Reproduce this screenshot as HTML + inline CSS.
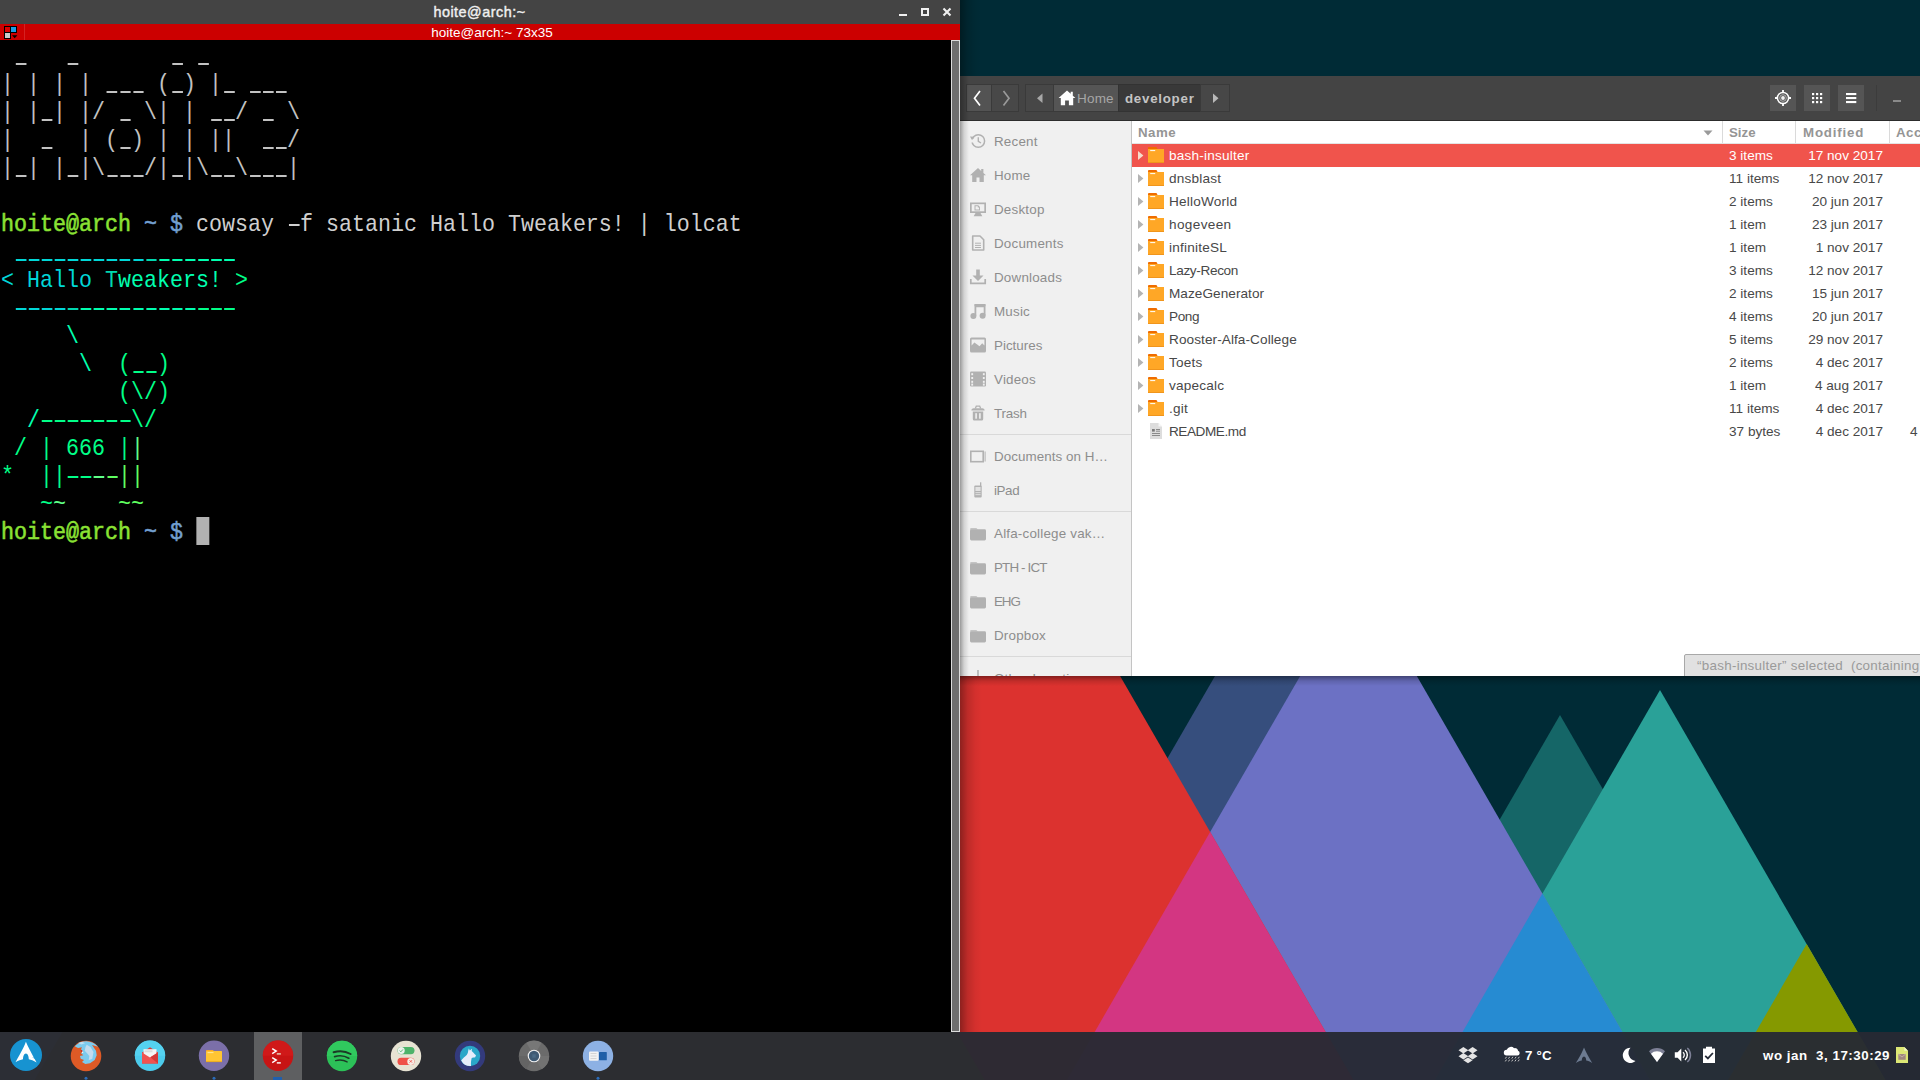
<!DOCTYPE html><html><head><meta charset="utf-8"><title>desktop</title><style>
*{margin:0;padding:0;box-sizing:border-box}
html,body{width:1920px;height:1080px;overflow:hidden;background:#002b36;font-family:"Liberation Sans",sans-serif}
svg{position:absolute;display:block;overflow:visible}
#wall{left:0;top:0;width:1920px;height:1080px}
#term{position:absolute;left:0;top:0;width:960px;height:1032px;background:#000}
#tsh{position:absolute;left:960px;top:0;width:22px;height:1032px;background:linear-gradient(90deg,rgba(0,0,0,.36),rgba(0,0,0,.14) 35%,rgba(0,0,0,.04) 70%,rgba(0,0,0,0))}
#ttitle{position:absolute;left:0;top:0;width:960px;height:24px;background:#444444;color:#f0f0f0;font-size:14.4px;letter-spacing:.5px;-webkit-text-stroke:.4px #f0f0f0;line-height:24px;text-align:center;padding-right:1px}
#tred{position:absolute;left:0;top:24px;width:960px;height:16px;background:#cc0000;color:#fff;font-size:13.5px;line-height:17px;text-align:center;padding-left:24px}
#tscroll{position:absolute;left:951px;top:40px;width:9px;height:992px;background:#6e6e6e;border:1px solid #dcdcdc}
pre.t{position:absolute;left:1px;font-family:"Liberation Mono",monospace;font-size:23.4px;line-height:28px;height:28px;color:#cfcfcf;white-space:pre;transform:scaleX(.9259);transform-origin:0 0}
pre.t b{font-weight:normal;-webkit-text-stroke:.55px currentColor}
.u,.h{display:inline-block;width:.6em;height:28px;vertical-align:top;background:linear-gradient(currentColor,currentColor) no-repeat 2.2px 20px/11.5px 2.3px}
.h{background-position:2.2px 12.9px}
.g{color:#8ae234}.bl{color:#729fcf}
#fm{position:absolute;left:960px;top:76px;width:960px;height:600px;background:#fff;overflow:hidden}
#fmhead{position:absolute;left:0;top:0;width:960px;height:45px;background:#444444;border-bottom:1px solid #2c2c2c}
.hb{position:absolute;top:8px;height:28px;border:1px solid #3a3a3a}
.ht{position:absolute;top:10px;height:27px;line-height:26px;font-size:13.5px;white-space:nowrap}
#side{position:absolute;left:0;top:45px;width:172px;height:555px;background:#f0f0f0;border-right:1px solid #c4c4c4}
#fsh{position:absolute;left:0;top:45px;width:9px;height:555px;background:linear-gradient(90deg,rgba(0,0,0,.36),rgba(0,0,0,.12) 45%,rgba(0,0,0,0))}
#fsh2{position:absolute;left:0;top:0;width:9px;height:45px;background:linear-gradient(90deg,rgba(0,0,0,.30),rgba(0,0,0,0))}
.si{position:absolute;left:34px;font-size:13.4px;color:#8d8d8d;height:34px;line-height:36px;white-space:nowrap;letter-spacing:0.2px}
.sep{position:absolute;left:0;width:171px;height:1px;background:#d9d9d9}
.sic{left:10px;width:16px;height:16px}
#colh{position:absolute;left:172px;top:45px;width:788px;height:23px;background:#fff;border-bottom:1px solid #e4e4e4}
.ch{position:absolute;top:0;height:22px;line-height:24px;font-size:13.3px;font-weight:bold;color:#959595;letter-spacing:0.45px}
.chs{position:absolute;top:0;width:1px;height:22px;background:#dadada}
.row{position:absolute;left:172px;width:788px;height:23px;font-size:13.6px;line-height:23px;color:#484848;white-space:nowrap}
.row.sel{background:#f0544c;color:#fff}
.row span{position:absolute;top:0}
.nm{left:37px;letter-spacing:.2px}.sz{left:597px}.dt{right:37px;text-align:right}
#stat{position:absolute;left:724px;top:578px;width:240px;height:24px;background:#e1e1e1;border:1px solid #a8a8a8;border-radius:2px 0 0 0;font-size:13.4px;line-height:21px;color:#9a9a9a;padding-left:12px;white-space:pre;overflow:hidden;letter-spacing:.28px}
#bar{position:absolute;left:0;top:1032px;width:1920px;height:48px;background:rgba(38,42,51,0.962)}
#hl{position:absolute;left:254px;top:1032px;width:48px;height:48px;background:#5e5f61}
.tt{position:absolute;top:1046px;height:20px;line-height:20px;font-size:13.3px;font-weight:bold;color:#fff;white-space:pre}
</style></head><body>
<svg id="wall" viewBox="0 0 1920 1080">
<rect width="1920" height="1080" fill="#002b36"/>
<polygon points="1215,676 1400,676 1400,1100 970,1100" fill="#364e7d"/>
<polygon points="1560,715 1782.3,1100 1337.7,1100" fill="#156667"/>
<polygon points="1660,690 1896.7,1100 1423.3,1100" fill="#2aa198"/>
<polygon points="1358.5,575 1661.6,1100 1055.4,1100" fill="#6c71c4"/>
<polygon points="1542.4,893.6 1661.6,1100 1423.3,1100" fill="#268bd2"/>
<polygon points="694,-62 1364.9,1100 23.1,1100" fill="#dc322f"/>
<polygon points="509.5,257 996.2,1100 22.8,1100" fill="#b58900"/>
<polygon points="0,1000 81,1000 23,1100 0,1100" fill="#b09a70"/>
<polygon points="1210.1,832.0 1364.8,1100 1055.4,1100" fill="#d33682"/>
<polygon points="1806.65,944 1897.11,1100 1716.58,1100" fill="#859900"/>
</svg>
<div id="term">
<div id="ttitle">hoite@arch:~</div>
<div id="tred">hoite@arch:~ 73x35</div>
<svg style="left:895px;top:4px;width:60px;height:16px" viewBox="895 4 60 16"><rect x="899" y="14" width="8" height="2" fill="#f0f0f0"/><rect x="922" y="9" width="6" height="6" fill="none" stroke="#f0f0f0" stroke-width="2"/><path d="M943.5 8.5L950.5 15.5M950.5 8.5L943.5 15.5" stroke="#f0f0f0" stroke-width="2.1"/></svg>
<svg style="left:0;top:24px;width:26px;height:16px" viewBox="0 24 26 16"><path d="M4 26h13v7h-6v6H4z" fill="#000"/><rect x="5" y="27" width="5" height="5" fill="#dd0000"/><rect x="11" y="27" width="5" height="5" fill="#1c9be4"/><rect x="5" y="33" width="5" height="5" fill="#c9c9c9"/><path d="M12 35.3h5.4l-2.7 3z" fill="#000"/><rect x="24" y="24" width="1" height="16" fill="#d42222"/></svg>
<div id="tscroll"></div>
<pre class="t" style="top:43px"><span style="color:#c2c2c2"> <span class="u"></span>   <span class="u"></span>       <span class="u"></span> <span class="u"></span></span></pre>
<pre class="t" style="top:71px"><span style="color:#c2c2c2">| | | | <span class="u"></span><span class="u"></span><span class="u"></span> (<span class="u"></span>) |<span class="u"></span> <span class="u"></span><span class="u"></span><span class="u"></span></span></pre>
<pre class="t" style="top:99px"><span style="color:#c2c2c2">| |<span class="u"></span>| |/ <span class="u"></span> \| | <span class="u"></span><span class="u"></span>/ <span class="u"></span> \</span></pre>
<pre class="t" style="top:127px"><span style="color:#c2c2c2">|  <span class="u"></span>  | (<span class="u"></span>) | | ||  <span class="u"></span><span class="u"></span>/</span></pre>
<pre class="t" style="top:155px"><span style="color:#c2c2c2">|<span class="u"></span>| |<span class="u"></span>|\<span class="u"></span><span class="u"></span><span class="u"></span>/|<span class="u"></span>|\<span class="u"></span><span class="u"></span>\<span class="u"></span><span class="u"></span><span class="u"></span>|</span></pre>
<pre class="t" style="top:211px"><b><span class="g">hoite@arch</span> <span class="bl">~ $</span></b> cowsay <span class="h"></span>f satanic Hallo Tweakers! | lolcat</pre>
<pre class="t" style="top:239px"> <span class="u" style="color:#00d7d7"></span><span class="u" style="color:#00d7d7"></span><span class="u" style="color:#00d7d7"></span><span class="u" style="color:#00d7d7"></span><span class="u" style="color:#00d7d7"></span><span class="u" style="color:#00d7d7"></span><span class="u" style="color:#00d7d7"></span><span class="u" style="color:#00d7d7"></span><span class="u" style="color:#00d7d7"></span><span class="u" style="color:#00d7d7"></span><span class="u" style="color:#00d7af"></span><span class="u" style="color:#00ffaf"></span><span class="u" style="color:#00ffaf"></span><span class="u" style="color:#00ffaf"></span><span class="u" style="color:#00ffaf"></span><span class="u" style="color:#00ffaf"></span><span class="u" style="color:#00ffaf"></span></pre>
<pre class="t" style="top:267px"><span style="color:#00d7d7">&lt;</span> <span style="color:#00d7d7">H</span><span style="color:#00d7d7">a</span><span style="color:#00d7d7">l</span><span style="color:#00d7d7">l</span><span style="color:#00d7d7">o</span> <span style="color:#00d7af">T</span><span style="color:#00ffaf">w</span><span style="color:#00ffaf">e</span><span style="color:#00ffaf">a</span><span style="color:#00ffaf">k</span><span style="color:#00ffaf">e</span><span style="color:#00ffaf">r</span><span style="color:#00ffaf">s</span><span style="color:#00ffaf">!</span> <span style="color:#00ff87">&gt;</span></pre>
<pre class="t" style="top:295px"> <span class="h" style="color:#00d7d7"></span><span class="h" style="color:#00d7d7"></span><span class="h" style="color:#00d7d7"></span><span class="h" style="color:#00d7d7"></span><span class="h" style="color:#00d7af"></span><span class="h" style="color:#00ffaf"></span><span class="h" style="color:#00ffaf"></span><span class="h" style="color:#00ffaf"></span><span class="h" style="color:#00ffaf"></span><span class="h" style="color:#00ffaf"></span><span class="h" style="color:#00ffaf"></span><span class="h" style="color:#00ffaf"></span><span class="h" style="color:#00ffaf"></span><span class="h" style="color:#00ffaf"></span><span class="h" style="color:#00ff87"></span><span class="h" style="color:#00ff87"></span><span class="h" style="color:#00ff87"></span></pre>
<pre class="t" style="top:323px">     <span style="color:#00ffaf">\</span></pre>
<pre class="t" style="top:351px">      <span style="color:#00ffaf">\</span>  <span style="color:#00ff87">(</span><span class="u" style="color:#00ff87"></span><span class="u" style="color:#00ff87"></span><span style="color:#00ff87">)</span></pre>
<pre class="t" style="top:379px">         <span style="color:#00ff87">(</span><span style="color:#00ff87">\</span><span style="color:#00ff87">/</span><span style="color:#00ff87">)</span></pre>
<pre class="t" style="top:407px">  <span style="color:#00ffaf">/</span><span class="h" style="color:#00ff87"></span><span class="h" style="color:#00ff87"></span><span class="h" style="color:#00ff87"></span><span class="h" style="color:#00ff87"></span><span class="h" style="color:#00ff87"></span><span class="h" style="color:#00ff87"></span><span class="h" style="color:#00ff87"></span><span style="color:#00ff87">\</span><span style="color:#00ff87">/</span></pre>
<pre class="t" style="top:435px"> <span style="color:#00ff87">/</span> <span style="color:#00ff87">|</span> <span style="color:#00ff87">6</span><span style="color:#00ff87">6</span><span style="color:#00ff87">6</span> <span style="color:#00ff87">|</span><span style="color:#5fff87">|</span></pre>
<pre class="t" style="top:463px"><span style="color:#00ff87">*</span>  <span style="color:#00ff87">|</span><span style="color:#00ff87">|</span><span class="h" style="color:#00ff87"></span><span class="h" style="color:#00ff87"></span><span class="h" style="color:#5fff87"></span><span class="h" style="color:#5fff5f"></span><span style="color:#5fff5f">|</span><span style="color:#5fff5f">|</span></pre>
<pre class="t" style="top:491px">   <span style="color:#00ff87">~</span><span style="color:#5fff87">~</span>    <span style="color:#5fff5f">~</span><span style="color:#5fff5f">~</span></pre>
<pre class="t" style="top:519px"><b><span class="g">hoite@arch</span> <span class="bl">~ $</span></b> <span style="background:#b2b2b2;display:inline-block;width:.6em;height:28px;vertical-align:top;margin-top:-2px"></span></pre>
</div>
<div id="tsh"></div>
<div id="fm">
<div id="fmhead">
<div class="hb" style="left:6px;width:26px;background:#535353"></div>
<div class="hb" style="left:31px;width:28px;background:#484848"></div>
<div class="hb" style="left:65px;width:29px;background:#474747"></div>
<div class="hb" style="left:93px;width:66px;background:#555555"></div>
<div class="hb" style="left:158px;width:83px;background:#393939;border-color:#333"></div>
<div class="hb" style="left:240px;width:30px;background:#474747"></div>
<svg style="left:0;top:0;width:280px;height:45px" viewBox="960 76 280 45"><path d="M980 91l-5.5 7.2 5.5 7.2" fill="none" stroke="#fff" stroke-width="1.7"/><path d="M1003.5 91l5.5 7.2-5.5 7.2" fill="none" stroke="#9a9a9a" stroke-width="1.7"/><path d="M1042.5 93.5v9.5l-5.5-4.75z" fill="#a8a8a8"/><path d="M1213 93.5v9.5l5.500-4.75z" fill="#b8b8b8"/><path d="M1067 90.5l-8.400 7.600h2.200v7.200h4.300v-4.800h3.800v4.800h4.300v-7.200h2.200l-2.600-2.350v-3.900h-2.100v2z" fill="#fff"/></svg>
<div class="ht" style="left:117px;color:#a6a6a6;letter-spacing:0.2px">Home</div>
<div class="ht" style="left:165px;color:#c4c4c4;font-weight:bold;letter-spacing:0.75px;font-size:13.3px">developer</div>
<div class="hb" style="left:810px;top:9px;width:26px;height:26px;background:#555;border:none"></div>
<div class="hb" style="left:844px;top:9px;width:26px;height:26px;background:#555;border:none"></div>
<div class="hb" style="left:878px;top:9px;width:26px;height:26px;background:#555;border:none"></div>
<svg style="left:800px;top:0;width:160px;height:45px" viewBox="1760 76 160 45"><circle cx="1783" cy="98" r="5.6" fill="none" stroke="#fff" stroke-width="1.5"/><circle cx="1783" cy="98" r="3.3" fill="none" stroke="#d0d0d0" stroke-width=".7"/><circle cx="1783" cy="98" r="1.9" fill="#f2f2f2"/><path d="M1783 90v3M1783 103v3M1775 98h3M1788 98h3" stroke="#fff" stroke-width="1.8"/><rect x="1812" y="93" width="2.2" height="2.2" fill="#fff"/><rect x="1812" y="97" width="2.2" height="2.2" fill="#fff"/><rect x="1812" y="101" width="2.2" height="2.2" fill="#fff"/><rect x="1816" y="93" width="2.2" height="2.2" fill="#fff"/><rect x="1816" y="97" width="2.2" height="2.2" fill="#fff"/><rect x="1816" y="101" width="2.2" height="2.2" fill="#fff"/><rect x="1820" y="93" width="2.2" height="2.2" fill="#fff"/><rect x="1820" y="97" width="2.2" height="2.2" fill="#fff"/><rect x="1820" y="101" width="2.2" height="2.2" fill="#fff"/><rect x="1846" y="93" width="10.3" height="2.1" fill="#fff"/><rect x="1846" y="97" width="10.3" height="2.1" fill="#fff"/><rect x="1846" y="101" width="10.3" height="2.1" fill="#fff"/><rect x="1876" y="85" width="1" height="26" fill="#3c3c3c"/><rect x="1893" y="100" width="8" height="2" fill="#8a8a8a"/></svg>
</div>
<div id="side">
<svg class="sic" style="top:12px" viewBox="0 0 16 16"><circle cx="8.300" cy="8" r="6.300" fill="none" stroke="#b1b1b1" stroke-width="1.5"/><path d="M8.300 4.300v4l2.700 1.700" fill="none" stroke="#b1b1b1" stroke-width="1.400"/><path d="M0 3.500l4.600.3-2.500 3.700z" fill="#b1b1b1"/><rect x="0" y="6.500" width="3.200" height="3" fill="#f0f0f0"/></svg>
<div class="si" style="top:3px">Recent</div>
<svg class="sic" style="top:46px" viewBox="0 0 16 16"><path d="M8 1L0 8.300h2.200V15h4.300v-4.600h3V15h4.300V8.300H16l-2.600-2.400V2h-2.200v1.900z" fill="#b1b1b1"/></svg>
<div class="si" style="top:37px">Home</div>
<svg class="sic" style="top:80px" viewBox="0 0 16 16"><path d="M0 1.500h16v10.500H0z" fill="#b1b1b1"/><rect x="1.700" y="3.200" width="12.600" height="7.100" fill="#f0f0f0"/><path d="M4.500 4.200h3.800l1.700 1.700v3.600H4.500z" fill="#b1b1b1"/><path d="M5.500 5.200h2.300v1.400h1.300v2H5.500z" fill="#f0f0f0"/><path d="M5.500 12h5l1.800 3.200H3.700z" fill="#b1b1b1"/></svg>
<div class="si" style="top:71px">Desktop</div>
<svg class="sic" style="top:114px" viewBox="0 0 16 16"><path d="M2.700 1h7.300l3.700 3.700v10.300H2.700z" fill="none" stroke="#b1b1b1" stroke-width="1.600" stroke-linejoin="round"/><path d="M5 8.200h6M5 10.400h6M5 12.500h6" stroke="#b1b1b1" stroke-width="1"/></svg>
<div class="si" style="top:105px">Documents</div>
<svg class="sic" style="top:148px" viewBox="0 0 16 16"><path d="M6.200 .5h3.600v6h3.700L8 12 2.500 6.500h3.700z" fill="#b1b1b1"/><path d="M.8 10v4.300h14.400V10" fill="none" stroke="#b1b1b1" stroke-width="1.700"/></svg>
<div class="si" style="top:139px">Downloads</div>
<svg class="sic" style="top:182px" viewBox="0 0 16 16"><path d="M4.500 1h11v11.500h-1.800V4.300H6.300v8.500H4.500z" fill="#b1b1b1"/><rect x="4.500" y="1" width="11" height="2.600" rx="1" fill="#b1b1b1"/><circle cx="3.400" cy="13" r="3" fill="#b1b1b1"/><circle cx="12.600" cy="12.800" r="3" fill="#b1b1b1"/></svg>
<div class="si" style="top:173px">Music</div>
<svg class="sic" style="top:216px" viewBox="0 0 16 16"><rect x="0" y=".5" width="16" height="15" rx="1.500" fill="#b1b1b1"/><path d="M1.600 8.500V2.500h12.800v6l-2.200-2.300-2.700 3-2.300-1.800-2.800-2z" fill="#f0f0f0"/></svg>
<div class="si" style="top:207px;letter-spacing:-0.0px">Pictures</div>
<svg class="sic" style="top:250px" viewBox="0 0 16 16"><rect x="0" y=".5" width="16" height="15" rx="1.300" fill="#b1b1b1"/><rect x="1.3" y="2.2" width="1.800" height="2" fill="#f0f0f0"/><rect x="1.3" y="6" width="1.800" height="2" fill="#f0f0f0"/><rect x="1.3" y="9.8" width="1.800" height="2" fill="#f0f0f0"/><rect x="1.3" y="12.6" width="1.800" height="2" fill="#f0f0f0"/><rect x="12.9" y="2.2" width="1.800" height="2" fill="#f0f0f0"/><rect x="12.9" y="6" width="1.800" height="2" fill="#f0f0f0"/><rect x="12.9" y="9.8" width="1.800" height="2" fill="#f0f0f0"/><rect x="12.9" y="12.6" width="1.800" height="2" fill="#f0f0f0"/><rect x="4.300" y="1.800" width="7.400" height="12.400" fill="#f0f0f0" opacity=".0"/></svg>
<div class="si" style="top:241px">Videos</div>
<svg class="sic" style="top:284px" viewBox="0 0 16 16"><path d="M2.800 6.500h10.400v7.500a1.500 1.500 0 0 1-1.500 1.500H4.300a1.500 1.500 0 0 1-1.500-1.500z" fill="#b1b1b1"/><rect x="5.300" y="8.200" width="1.600" height="5.500" fill="#f0f0f0"/><rect x="9.100" y="8.200" width="1.600" height="5.500" fill="#f0f0f0"/><path d="M1.300 5.500c0-1.300 1-2.300 2.300-2.300h8.800c1.300 0 2.300 1 2.300 2.300z" fill="#b1b1b1"/><path d="M5.300 3.500l1-2.300h3.400l1 2.300" fill="none" stroke="#b1b1b1" stroke-width="1.300"/></svg>
<div class="si" style="top:275px;letter-spacing:-0.2px">Trash</div>
<div class="sep" style="top:313px"></div>
<svg class="sic" style="top:327px" viewBox="0 0 16 16"><rect x=".8" y="3.300" width="12.400" height="10.400" fill="none" stroke="#b1b1b1" stroke-width="1.600"/><rect x="14.600" y="3.500" width="1" height="10" fill="#b1b1b1"/></svg>
<div class="si" style="top:318px;letter-spacing:0.05px">Documents on H…</div>
<svg class="sic" style="top:361px" viewBox="0 0 16 16"><rect x="4.300" y="3.500" width="7.400" height="12" rx="1" fill="#b1b1b1"/><rect x="10" y="0.300" width="1.300" height="4" fill="#b1b1b1"/><rect x="5.400" y="5" width="5.200" height="4" fill="#e2e2e2"/><rect x="5.400" y="10" width="5.200" height="1.200" fill="#d8d8d8"/><rect x="5.400" y="12" width="5.200" height="1.200" fill="#d8d8d8"/></svg>
<div class="si" style="top:352px;letter-spacing:-0.4px">iPad</div>
<div class="sep" style="top:390px"></div>
<svg class="sic" style="top:404px" viewBox="0 0 16 16"><path d="M0 4.300c0-.8.600-1.400 1.400-1.400h5l1.500 1.700H0z" fill="#c4c4c4"/><rect x="0" y="4.300" width="16" height="11.200" rx="1.400" fill="#b1b1b1"/></svg>
<div class="si" style="top:395px">Alfa-college vak…</div>
<svg class="sic" style="top:438px" viewBox="0 0 16 16"><path d="M0 4.300c0-.8.600-1.400 1.400-1.400h5l1.500 1.700H0z" fill="#c4c4c4"/><rect x="0" y="4.300" width="16" height="11.200" rx="1.400" fill="#b1b1b1"/></svg>
<div class="si" style="top:429px;letter-spacing:-0.85px">PTH - ICT</div>
<svg class="sic" style="top:472px" viewBox="0 0 16 16"><path d="M0 4.300c0-.8.600-1.400 1.400-1.400h5l1.500 1.700H0z" fill="#c4c4c4"/><rect x="0" y="4.300" width="16" height="11.200" rx="1.400" fill="#b1b1b1"/></svg>
<div class="si" style="top:463px;letter-spacing:-1.1px">EHG</div>
<svg class="sic" style="top:506px" viewBox="0 0 16 16"><path d="M0 4.300c0-.8.600-1.400 1.400-1.400h5l1.500 1.700H0z" fill="#c4c4c4"/><rect x="0" y="4.300" width="16" height="11.200" rx="1.400" fill="#b1b1b1"/></svg>
<div class="si" style="top:497px">Dropbox</div>
<div class="sep" style="top:535px"></div>
<svg class="sic" style="top:549px" viewBox="0 0 16 16"><path d="M7.200 0h1.600v6.500H7.200z" fill="#b1b1b1"/></svg>
<div class="si" style="top:540px">Other Locations</div>
</div>
<div id="fsh"></div><div id="fsh2"></div>
<div id="colh"><div class="ch" style="left:6px">Name</div><svg style="left:571px;top:9px;width:10px;height:6px" viewBox="0 0 10 6"><path d="M.5 .5h9L5 5.500z" fill="#9a9a9a"/></svg><div class="chs" style="left:590px"></div><div class="ch" style="left:597px;letter-spacing:0">Size</div><div class="chs" style="left:663px"></div><div class="ch" style="left:671px;letter-spacing:.8px">Modified</div><div class="chs" style="left:757px"></div><div class="ch" style="left:764px">Acc</div></div>
<div class="row sel" style="top:68px"><svg style="left:16px;top:3px;width:16px;height:16px" viewBox="0 0 16 16"><path d="M0 1.200C0 .5.500 0 1.200 0h7.300l1.200 2.200H0z" fill="#ef6c00"/><path d="M0 2h16v13.200H0z" fill="#ffa726"/><rect x="0" y="15" width="16" height="1" fill="#f0951c"/><rect x="2.200" y="3.100" width="5" height="1" fill="#fff"/></svg><svg style="left:6px;top:7px;width:6px;height:9px" viewBox="0 0 6 9"><path d="M0 0l5.400 4.500L0 9z" fill="#f6dccb"/></svg><span class="nm">bash-insulter</span><span class="sz">3 items</span><span class="dt">17 nov 2017</span></div>
<div class="row" style="top:91px"><svg style="left:16px;top:3px;width:16px;height:16px" viewBox="0 0 16 16"><path d="M0 1.200C0 .5.500 0 1.200 0h7.300l1.200 2.200H0z" fill="#ef6c00"/><path d="M0 2h16v13.200H0z" fill="#ffa726"/><rect x="0" y="15" width="16" height="1" fill="#f0951c"/><rect x="2.200" y="3.100" width="5" height="1" fill="#fff"/></svg><svg style="left:6px;top:7px;width:6px;height:9px" viewBox="0 0 6 9"><path d="M0 0l5.400 4.500L0 9z" fill="#b4b4b4"/></svg><span class="nm">dnsblast</span><span class="sz">11 items</span><span class="dt">12 nov 2017</span></div>
<div class="row" style="top:114px"><svg style="left:16px;top:3px;width:16px;height:16px" viewBox="0 0 16 16"><path d="M0 1.200C0 .5.500 0 1.200 0h7.300l1.200 2.200H0z" fill="#ef6c00"/><path d="M0 2h16v13.200H0z" fill="#ffa726"/><rect x="0" y="15" width="16" height="1" fill="#f0951c"/><rect x="2.200" y="3.100" width="5" height="1" fill="#fff"/></svg><svg style="left:6px;top:7px;width:6px;height:9px" viewBox="0 0 6 9"><path d="M0 0l5.400 4.500L0 9z" fill="#b4b4b4"/></svg><span class="nm">HelloWorld</span><span class="sz">2 items</span><span class="dt">20 jun 2017</span></div>
<div class="row" style="top:137px"><svg style="left:16px;top:3px;width:16px;height:16px" viewBox="0 0 16 16"><path d="M0 1.200C0 .5.500 0 1.200 0h7.300l1.200 2.200H0z" fill="#ef6c00"/><path d="M0 2h16v13.200H0z" fill="#ffa726"/><rect x="0" y="15" width="16" height="1" fill="#f0951c"/><rect x="2.200" y="3.100" width="5" height="1" fill="#fff"/></svg><svg style="left:6px;top:7px;width:6px;height:9px" viewBox="0 0 6 9"><path d="M0 0l5.400 4.500L0 9z" fill="#b4b4b4"/></svg><span class="nm" style="letter-spacing:0.35px">hogeveen</span><span class="sz">1 item</span><span class="dt">23 jun 2017</span></div>
<div class="row" style="top:160px"><svg style="left:16px;top:3px;width:16px;height:16px" viewBox="0 0 16 16"><path d="M0 1.200C0 .5.500 0 1.200 0h7.300l1.200 2.200H0z" fill="#ef6c00"/><path d="M0 2h16v13.200H0z" fill="#ffa726"/><rect x="0" y="15" width="16" height="1" fill="#f0951c"/><rect x="2.200" y="3.100" width="5" height="1" fill="#fff"/></svg><svg style="left:6px;top:7px;width:6px;height:9px" viewBox="0 0 6 9"><path d="M0 0l5.400 4.500L0 9z" fill="#b4b4b4"/></svg><span class="nm">infiniteSL</span><span class="sz">1 item</span><span class="dt">1 nov 2017</span></div>
<div class="row" style="top:183px"><svg style="left:16px;top:3px;width:16px;height:16px" viewBox="0 0 16 16"><path d="M0 1.200C0 .5.500 0 1.200 0h7.300l1.200 2.200H0z" fill="#ef6c00"/><path d="M0 2h16v13.200H0z" fill="#ffa726"/><rect x="0" y="15" width="16" height="1" fill="#f0951c"/><rect x="2.200" y="3.100" width="5" height="1" fill="#fff"/></svg><svg style="left:6px;top:7px;width:6px;height:9px" viewBox="0 0 6 9"><path d="M0 0l5.400 4.500L0 9z" fill="#b4b4b4"/></svg><span class="nm" style="letter-spacing:-0.35px">Lazy-Recon</span><span class="sz">3 items</span><span class="dt">12 nov 2017</span></div>
<div class="row" style="top:206px"><svg style="left:16px;top:3px;width:16px;height:16px" viewBox="0 0 16 16"><path d="M0 1.200C0 .5.500 0 1.200 0h7.300l1.200 2.200H0z" fill="#ef6c00"/><path d="M0 2h16v13.200H0z" fill="#ffa726"/><rect x="0" y="15" width="16" height="1" fill="#f0951c"/><rect x="2.200" y="3.100" width="5" height="1" fill="#fff"/></svg><svg style="left:6px;top:7px;width:6px;height:9px" viewBox="0 0 6 9"><path d="M0 0l5.400 4.500L0 9z" fill="#b4b4b4"/></svg><span class="nm" style="letter-spacing:0.05px">MazeGenerator</span><span class="sz">2 items</span><span class="dt">15 jun 2017</span></div>
<div class="row" style="top:229px"><svg style="left:16px;top:3px;width:16px;height:16px" viewBox="0 0 16 16"><path d="M0 1.200C0 .5.500 0 1.200 0h7.300l1.200 2.200H0z" fill="#ef6c00"/><path d="M0 2h16v13.200H0z" fill="#ffa726"/><rect x="0" y="15" width="16" height="1" fill="#f0951c"/><rect x="2.200" y="3.100" width="5" height="1" fill="#fff"/></svg><svg style="left:6px;top:7px;width:6px;height:9px" viewBox="0 0 6 9"><path d="M0 0l5.400 4.500L0 9z" fill="#b4b4b4"/></svg><span class="nm" style="letter-spacing:-0.4px">Pong</span><span class="sz">4 items</span><span class="dt">20 jun 2017</span></div>
<div class="row" style="top:252px"><svg style="left:16px;top:3px;width:16px;height:16px" viewBox="0 0 16 16"><path d="M0 1.200C0 .5.500 0 1.200 0h7.300l1.200 2.200H0z" fill="#ef6c00"/><path d="M0 2h16v13.200H0z" fill="#ffa726"/><rect x="0" y="15" width="16" height="1" fill="#f0951c"/><rect x="2.200" y="3.100" width="5" height="1" fill="#fff"/></svg><svg style="left:6px;top:7px;width:6px;height:9px" viewBox="0 0 6 9"><path d="M0 0l5.400 4.500L0 9z" fill="#b4b4b4"/></svg><span class="nm" style="letter-spacing:0.08px">Rooster-Alfa-College</span><span class="sz">5 items</span><span class="dt">29 nov 2017</span></div>
<div class="row" style="top:275px"><svg style="left:16px;top:3px;width:16px;height:16px" viewBox="0 0 16 16"><path d="M0 1.200C0 .5.500 0 1.200 0h7.300l1.200 2.200H0z" fill="#ef6c00"/><path d="M0 2h16v13.200H0z" fill="#ffa726"/><rect x="0" y="15" width="16" height="1" fill="#f0951c"/><rect x="2.200" y="3.100" width="5" height="1" fill="#fff"/></svg><svg style="left:6px;top:7px;width:6px;height:9px" viewBox="0 0 6 9"><path d="M0 0l5.400 4.500L0 9z" fill="#b4b4b4"/></svg><span class="nm">Toets</span><span class="sz">2 items</span><span class="dt">4 dec 2017</span></div>
<div class="row" style="top:298px"><svg style="left:16px;top:3px;width:16px;height:16px" viewBox="0 0 16 16"><path d="M0 1.200C0 .5.500 0 1.200 0h7.300l1.200 2.200H0z" fill="#ef6c00"/><path d="M0 2h16v13.200H0z" fill="#ffa726"/><rect x="0" y="15" width="16" height="1" fill="#f0951c"/><rect x="2.200" y="3.100" width="5" height="1" fill="#fff"/></svg><svg style="left:6px;top:7px;width:6px;height:9px" viewBox="0 0 6 9"><path d="M0 0l5.400 4.500L0 9z" fill="#b4b4b4"/></svg><span class="nm">vapecalc</span><span class="sz">1 item</span><span class="dt">4 aug 2017</span></div>
<div class="row" style="top:321px"><svg style="left:16px;top:3px;width:16px;height:16px" viewBox="0 0 16 16"><path d="M0 1.200C0 .5.500 0 1.200 0h7.300l1.200 2.200H0z" fill="#ef6c00"/><path d="M0 2h16v13.200H0z" fill="#ffa726"/><rect x="0" y="15" width="16" height="1" fill="#f0951c"/><rect x="2.200" y="3.100" width="5" height="1" fill="#fff"/></svg><svg style="left:6px;top:7px;width:6px;height:9px" viewBox="0 0 6 9"><path d="M0 0l5.400 4.500L0 9z" fill="#b4b4b4"/></svg><span class="nm">.git</span><span class="sz">11 items</span><span class="dt">4 dec 2017</span></div>
<div class="row" style="top:344px"><svg style="left:18px;top:3px;width:12px;height:16px" viewBox="0 0 12 16"><path d="M0 0h8.500L12 3.500V16H0z" fill="#dddddd"/><path d="M8.500 0L12 3.500H8.500z" fill="#f6f6f6"/><rect x="2" y="6" width="2.800" height="2.600" fill="#7a7a7a"/><path d="M6 6.500h4M6 8.200h4M2 10.500h8M2 12.500h8" stroke="#8a8a8a" stroke-width="1"/></svg><span class="nm" style="letter-spacing:-0.45px">README.md</span><span class="sz">37 bytes</span><span class="dt">4 dec 2017</span><span style="left:778px">4</span></div>
<div id="stat">“bash-insulter” selected  (containing 3 items)</div>
</div>
<div style="position:absolute;left:960px;top:676px;width:960px;height:10px;background:linear-gradient(rgba(0,0,0,.4),rgba(0,0,0,.12) 50%,rgba(0,0,0,0))"></div>
<div id="bar"></div><div id="hl"></div>
<svg style="left:0;top:1032px;width:640px;height:48px" viewBox="0 1032 640 48">
<circle cx="26" cy="1055" r="16" fill="#1793d1"/>
<path d="M25.900 1041.800c-1.500 4.100-3.800 8.600-6.400 13.200-1.300 2.400-2.700 4.800-4 7.300 3-1.700 5.300-2.600 7.500-3 .1-2.600.8-5.600 2.900-5.700 2.100.1 2.800 3.100 2.900 5.700 2.200.4 4.700 1.300 7.800 3.100-.7-1.300-1.300-2.400-1.900-3.500-.9-.6-1.400-1-2.600-1.600.8.200 1.300.4 1.900.7-2.900-5.300-6.200-11.800-8.100-16.200z" fill="#fff"/>
<circle cx="86" cy="1056" r="15.300" fill="#de5a26"/>
<path d="M74.700 1046.300A15.300 15.300 0 0 1 98 1046.800L92 1045L96 1050.700L96.700 1055.300L94.700 1060L90 1063.300L85.300 1064L82 1062L84 1060L80.700 1058.700L80 1056L83.300 1055.300L81 1053.300L82.700 1051.300L81 1049.300L82 1047.300L78 1048z" fill="#7ccbee"/>
<path d="M86.700 1044.800L90.500 1047L93.500 1052L92.300 1058.700L88.700 1060.200L89.300 1056L87.300 1053.500L84.700 1050.700L85.500 1047z" fill="#c3dcee"/>
<path d="M78 1043l4-1.300 3 1.500-3.500 1.200z" fill="#bfe0f2"/>
<path d="M80.600 1050l2.200 1-1.400 1z" fill="#c8181c"/><circle cx="82.600" cy="1052.200" r=".7" fill="#fff"/>
<circle cx="86" cy="1078.300" r="1.500" fill="#2b6cb8"/>
<circle cx="150" cy="1055.800" r="15.200" fill="#4ccbec"/><path d="M134.800 1055.800a15.200 15.200 0 0 1 30.400 0z" fill="#55d2f0"/>
<path d="M142 1052.500l8-5.300 8 5.300v11h-16z" fill="#d93a36"/><path d="M143.500 1049.200h13v9.500h-13z" fill="#f4f4f4"/><path d="M144.500 1050.300h8v2h-8z" fill="#dcdcdc"/><path d="M142 1052.500l8 5 8-5v11h-16z" fill="#ef5350"/><path d="M150.300 1057.300L158 1052.500v11z" fill="#d43a38"/>
<circle cx="214" cy="1055.800" r="15.200" fill="#7b6fa9"/>
<path d="M206 1051c0-.6.400-1 1-1h6l1 1.200h-8z" fill="#f9a825"/><rect x="206" y="1051" width="16" height="11" rx=".6" fill="#ffc533"/><rect x="206" y="1061.200" width="16" height=".9" fill="#e8a820"/><rect x="207.500" y="1052.200" width="6" height=".9" fill="#ffe9a8"/>
<circle cx="214" cy="1078.300" r="1.500" fill="#2b6cb8"/>
<circle cx="278" cy="1055.800" r="15.200" fill="#c81414"/><path d="M262.800 1055.800a15.200 15.200 0 0 1 30.400 0z" fill="#d01919"/>
<path d="M272.200 1048.600l4 2.500-4 2.500M272.200 1057.600l4 2.500-4 2.500" fill="none" stroke="#fff" stroke-width="1.500"/><rect x="276.800" y="1053.200" width="4" height="1.400" fill="#e8d8c0"/><rect x="276.800" y="1062.200" width="4" height="1.400" fill="#fff"/>
<rect x="273" y="1077" width="9" height="3" fill="#1f5fae"/>
<circle cx="342" cy="1056" r="15.200" fill="#2cc158"/><path d="M326.800 1056a15.200 15.200 0 0 1 30.400 0z" fill="#30c95e"/>
<path d="M333.600 1052.300c5.600-1.800 12-1.200 17 1.700" fill="none" stroke="#1c3a26" stroke-width="2" stroke-linecap="round"/><path d="M334.600 1056.600c4.700-1.400 10-.9 14.200 1.600" fill="none" stroke="#1c3a26" stroke-width="1.700" stroke-linecap="round"/><path d="M335.600 1060.600c3.900-1.100 8-.7 11.500 1.300" fill="none" stroke="#1c3a26" stroke-width="1.400" stroke-linecap="round"/>
<circle cx="406" cy="1056" r="15.200" fill="#e7e3d3"/>
<rect x="397.500" y="1047" width="17" height="7.200" rx="3.600" fill="#4db36a"/><circle cx="401.200" cy="1050.600" r="3.500" fill="#eef2ee"/><path d="M399.700 1050.600l1.200 1.200 2-2.300" fill="none" stroke="#4db36a" stroke-width=".9"/>
<rect x="397.500" y="1057.800" width="17" height="7.200" rx="3.600" fill="#ef5148"/><circle cx="410.800" cy="1061.400" r="3.500" fill="#f6eee6"/><path d="M409.600 1060.200l2.400 2.400M412 1060.200l-2.400 2.400" stroke="#ef5148" stroke-width=".9"/>
<circle cx="470" cy="1056" r="15.200" fill="#333a7c"/><circle cx="470" cy="1056" r="10.200" fill="#2aa7c9"/>
<path d="M461.200 1060.500c1.500-2.300 3.800-3.600 5.500-5.500 1-1.200 1.300-2.700 1.500-4.300l.6-2.200 1 2 2.200-1.800-.3 2.300c1.500 1.200 2.500 3 4.300 4.300l-.8 1.900c-1.300.3-2.500.1-3.500.9-.7 2.400-.9 5.300-.7 7.900a10.200 10.200 0 0 1-9.800-5.500z" fill="#e6edfb"/>
<circle cx="534" cy="1056" r="15.200" fill="#6b6b6b"/><path d="M534 1056l-7.600-13.200a15.200 15.200 0 0 1 15.200 0z" fill="#777"/><path d="M534 1056l15.200 0a15.200 15.200 0 0 1-7.600 13.200z" fill="#727272"/><path d="M534 1056l-7.600 13.200a15.200 15.200 0 0 1-7.600-13.200z" fill="#646464"/>
<circle cx="534" cy="1056" r="6.300" fill="#f2f2f2"/><circle cx="534" cy="1056" r="5.200" fill="#3e5a74"/><rect x="532.300" y="1054.300" width="3.400" height="3.400" fill="#4a6a86"/>
<circle cx="598" cy="1056" r="15.200" fill="#8db1e4"/>
<rect x="589" y="1051.500" width="9.600" height="9.200" rx="1" fill="#f2f2f2"/><path d="M590.500 1053.500h6M590.500 1056h6M590.500 1058.500h6" stroke="#d4d4d4" stroke-width="1.200"/><rect x="599" y="1052" width="7.800" height="8.300" rx=".6" fill="#1f5fa8"/>
<circle cx="598" cy="1078.300" r="1.500" fill="#2b6cb8"/>
</svg>
<svg style="left:1450px;top:1036px;width:470px;height:40px" viewBox="1450 1036 470 40">
<path d="M1463.4 1046.9L1468.3000000000002 1050.2L1463.4 1053.5L1458.5 1050.2z" fill="#e4e4e4"/><path d="M1472.6 1046.9L1477.5 1050.2L1472.6 1053.5L1467.6999999999998 1050.2z" fill="#e4e4e4"/><path d="M1463.4 1052.9L1468.3000000000002 1056.2L1463.4 1059.5L1458.5 1056.2z" fill="#e4e4e4"/><path d="M1472.6 1052.9L1477.5 1056.2L1472.6 1059.5L1467.6999999999998 1056.2z" fill="#e4e4e4"/><path d="M1468 1057.3999999999999L1472.6 1060.3L1468 1063.2L1463.4 1060.3z" fill="#e4e4e4"/>
<path d="M1506.600 1055.600a2.900 2.900 0 0 1 .2-5.800a4.400 4.400 0 0 1 7.300-1.600a3.200 3.200 0 0 1 4 2.600a2.500 2.500 0 0 1-.6 4.800z" fill="#fff"/>
<path d="M1506.5 1056.8l-1.200 1.800" stroke="#c8c8c8" stroke-width="1"/><path d="M1506.5 1059.6l-1.200 1.800" stroke="#c8c8c8" stroke-width="1"/><path d="M1509.7 1056.8l-1.200 1.800" stroke="#c8c8c8" stroke-width="1"/><path d="M1509.7 1059.6l-1.200 1.800" stroke="#c8c8c8" stroke-width="1"/><path d="M1512.9 1056.8l-1.200 1.800" stroke="#c8c8c8" stroke-width="1"/><path d="M1512.9 1059.6l-1.200 1.800" stroke="#c8c8c8" stroke-width="1"/><path d="M1516.1 1056.8l-1.200 1.800" stroke="#c8c8c8" stroke-width="1"/><path d="M1516.1 1059.6l-1.200 1.800" stroke="#c8c8c8" stroke-width="1"/><path d="M1519.3 1056.8l-1.200 1.800" stroke="#c8c8c8" stroke-width="1"/><path d="M1519.3 1059.6l-1.200 1.800" stroke="#c8c8c8" stroke-width="1"/>
<path d="M1584 1047.500c-1 2.700-2.300 5.300-4 8.400-1.300 2.300-2.700 4.600-4.200 7 2.400-1.400 4.300-2.200 6-2.500 0-1.800.7-3.700 2.200-3.800 1.500.1 2.200 2 2.200 3.800 1.800.3 3.700 1.100 6 2.500-2.800-4.500-6.300-10.500-8.200-15.400z" fill="#6d7b91"/>
<path d="M1630.500 1047.700a7.600 7.600 0 1 0 5 13.200 8 8 0 0 1-5-13.200z" fill="#fff"/>
<path d="M1649 1051.200a11.500 11.500 0 0 1 16 0l-8 10.800z" fill="#7d8096"/><path d="M1651 1053.700a8.500 8.500 0 0 1 12 0l-6 8.300z" fill="#fff"/>
<path d="M1674.800 1052.200h2.800l3.700-3.700v13l-3.700-3.700h-2.800z" fill="#fff"/><path d="M1683 1052.300a3.500 3.500 0 0 1 0 5.400" fill="none" stroke="#fff" stroke-width="1.300"/><path d="M1685 1050a6.500 6.500 0 0 1 0 10" fill="none" stroke="#fff" stroke-width="1.400"/><path d="M1687.300 1048a9.300 9.300 0 0 1 0 14" fill="none" stroke="#7d8096" stroke-width="1.500"/>
<path d="M1703 1048.600h3v-1.800h6v1.800h3v14.400h-12z" fill="#fff"/><path d="M1705.200 1055.800l2.700 2.600 5-5.400" fill="none" stroke="#262c38" stroke-width="1.800"/>
<path d="M1896 1047h8.300l3.700 3.700v12.300h-12z" fill="#dce775"/><path d="M1904.300 1047l3.700 3.700h-3.700z" fill="#f2f7c4"/><rect x="1898.300" y="1054" width="7.400" height="5.800" fill="#a1887f"/><path d="M1898.300 1054l3.700 3 3.700-3" fill="none" stroke="#c9b8a8" stroke-width=".9"/>
</svg>
<div class="tt" style="left:1525px;letter-spacing:.2px">7 °C</div>
<div class="tt" style="left:1763px;letter-spacing:.54px">wo jan  3, 17:30:29</div>
</body></html>
